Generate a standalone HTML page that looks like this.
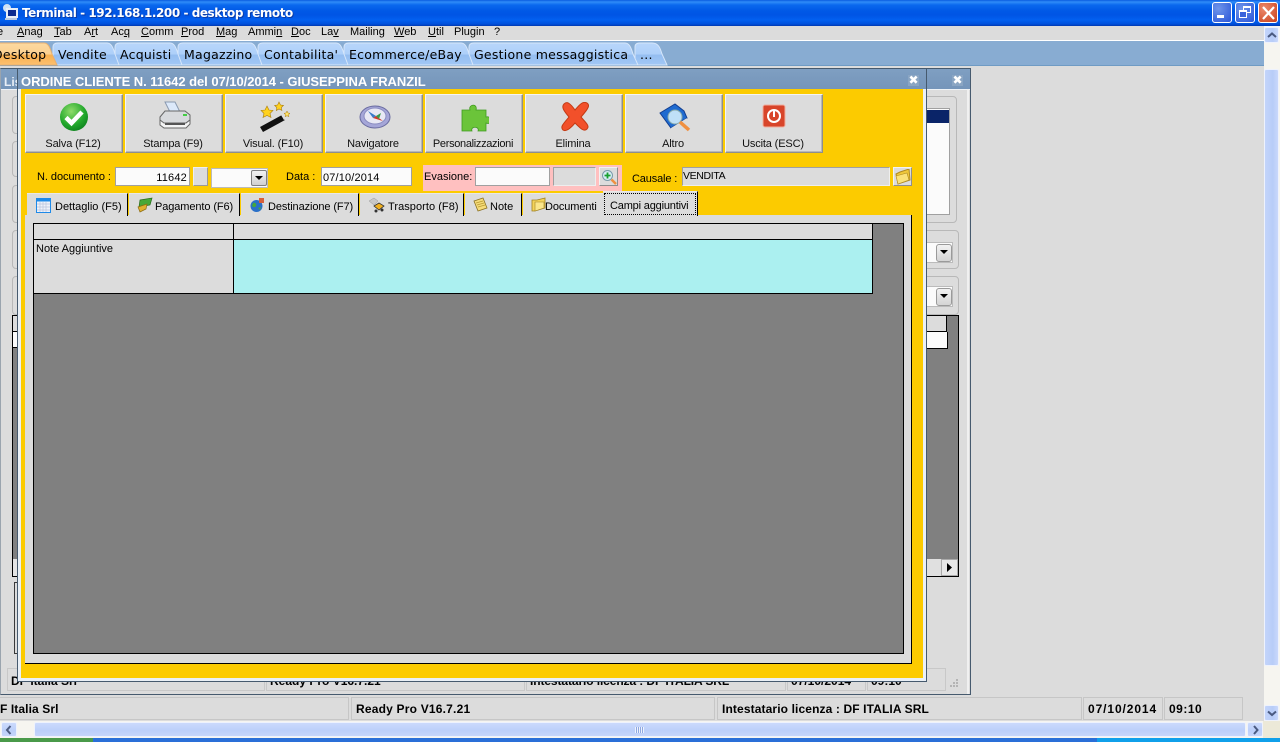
<!DOCTYPE html>
<html><head><meta charset="utf-8"><style>
html,body{margin:0;padding:0;width:1280px;height:742px;overflow:hidden;background:#dcdcdc}
body{position:relative;font-family:"Liberation Sans",sans-serif;font-size:11px;color:#000}
div,span.t,svg.a{position:absolute;box-sizing:border-box}
span.t{white-space:nowrap;line-height:13px}
.btn{background:#dcdcdc;border:1px solid;border-color:#f4f4f4 #8e8e8e #8e8e8e #f4f4f4;width:98px;height:59px;top:94px;box-shadow:inset -1px -1px 0 #b8b8b8}
.btn span.t{left:-1px;width:96px;text-align:center;top:43px;font-size:11px;color:#111;letter-spacing:-.15px}
.in{background:#fbfbfb;border:1px solid #a0a0a0}
.gb{border:1px solid #b8b8b8;border-radius:4px}
.tab{top:193px;height:23px;background:#dcdcdc;border-right:1px solid #000;border-top:1px solid #e8e8e8}
.tab span.t{top:7px}
.st{top:697px;height:23px;border:1px solid #c6c6c6;font-weight:bold;font-size:12px}
.st span.t{top:5px}
.st2{top:668px;height:23px;border:1px solid #c8c8c8;font-weight:bold;font-size:12px}
.sb{background:linear-gradient(90deg,#c3d4fb,#b8cdf8 60%,#c9d8fb);border:1px solid #eef2fd;border-radius:2px}
.sbh{background:linear-gradient(180deg,#cbdafc,#bccffa 60%,#c5d5fb);border:1px solid #eef2fd;border-radius:2px}
.x{width:11px;height:11px;background:#8aa5c3;color:#fff;font:bold 12px/11px "DejaVu Sans",sans-serif;text-align:center}
.m{top:26px}
.tb{top:48px;font:12.5px/14px "DejaVu Sans",sans-serif !important;letter-spacing:.25px}
</style></head><body>

<!-- XP title bar -->
<div style="left:0;top:0;width:1280px;height:26px;background:linear-gradient(180deg,#0a5ce0 0,#2f8cf8 2px,#0a68ee 5px,#0058e6 11px,#0055e5 15px,#0260f0 20px,#0050dc 24px,#0038b0 26px)"></div>
<svg class="a" style="left:2px;top:3px" width="17" height="18" viewBox="0 0 17 18"><circle cx="5" cy="5" r="4" fill="#cfe2f5"/><rect x="4" y="5" width="12" height="10" fill="#e8eef8"/><rect x="6" y="7" width="8" height="6" fill="#0a2a90"/><rect x="3" y="15" width="12" height="2" fill="#b8c8e0"/></svg>
<span class="t" style="left:22px;top:6px;color:#fff;font:bold 12px/14px 'DejaVu Sans',sans-serif;letter-spacing:-.45px;text-shadow:1px 1px 0 #0a3ca8">Terminal - 192.168.1.200 - desktop remoto</span>
<div style="left:1212px;top:2px;width:20px;height:21px;border:1px solid #fff;border-radius:3px;background:radial-gradient(circle at 30% 30%,#6f95ea,#2a55d8)"><div style="left:4px;top:12px;width:7px;height:3px;background:#fff"></div></div>
<div style="left:1235px;top:2px;width:20px;height:21px;border:1px solid #fff;border-radius:3px;background:radial-gradient(circle at 30% 30%,#6f95ea,#2a55d8)"><div style="left:7px;top:3px;width:8px;height:7px;border:1px solid #fff;border-top-width:2px"></div><div style="left:3px;top:7px;width:8px;height:8px;border:1px solid #fff;border-top-width:2px;background:#3a64dc"></div></div>
<div style="left:1258px;top:2px;width:20px;height:21px;border:1px solid #fff;border-radius:3px;background:radial-gradient(circle at 30% 30%,#ec8a6c,#c9401c)"><svg class="a" style="left:2px;top:3px" width="15" height="14"><path d="M2 1L13 13M13 1L2 13" stroke="#fff" stroke-width="2.2"/></svg></div>

<!-- Menu -->
<div style="left:0;top:26px;width:1264px;height:15px;background:#dcdcdc;border-bottom:1px solid #fff"></div>
<span class="t m" style="left:-3px">e</span>
<span class="t m" style="left:17px"><u>A</u>nag</span>
<span class="t m" style="left:54px"><u>T</u>ab</span>
<span class="t m" style="left:84px">A<u>r</u>t</span>
<span class="t m" style="left:111px">Ac<u>q</u></span>
<span class="t m" style="left:141px"><u>C</u>omm</span>
<span class="t m" style="left:181px"><u>P</u>rod</span>
<span class="t m" style="left:216px"><u>M</u>ag</span>
<span class="t m" style="left:248px">Ammi<u>n</u></span>
<span class="t m" style="left:291px"><u>D</u>oc</span>
<span class="t m" style="left:321px">La<u>v</u></span>
<span class="t m" style="left:350px">Mailin<u>g</u></span>
<span class="t m" style="left:394px"><u>W</u>eb</span>
<span class="t m" style="left:428px"><u>U</u>til</span>
<span class="t m" style="left:454px">Plugin</span>
<span class="t m" style="left:494px">?</span>

<!-- Tab strip -->
<div style="left:0;top:41px;width:1264px;height:25px;background:#88acd2;border-bottom:1px solid #6f9bc4"></div>
<svg class="a" style="left:0;top:41px" width="680" height="25" viewBox="0 0 680 25">
<defs>
<linearGradient id="b" x1="0" y1="0" x2="0" y2="1"><stop offset="0" stop-color="#b8d6fb"/><stop offset=".5" stop-color="#aed0f9"/><stop offset=".55" stop-color="#94bdf0"/><stop offset="1" stop-color="#a2c8f5"/></linearGradient>
<linearGradient id="o" x1="0" y1="0" x2="0" y2="1"><stop offset="0" stop-color="#fcd9a0"/><stop offset=".5" stop-color="#fbd090"/><stop offset=".55" stop-color="#f8b050"/><stop offset="1" stop-color="#fcc070"/></linearGradient>
</defs>
<g fill="url(#b)" stroke="#d6e6fa" stroke-width="1">
<path d="M635 24V6Q635 2 640 2H652C658 2 660 6 662 13L667 24Z"/>
<path d="M469 24V6Q469 2 474 2H625C629 2 631 6 633 13L638 24Z"/>
<path d="M344 24V6Q344 2 349 2H461C465 2 467 6 469 13L473 24Z"/>
<path d="M258 24V6Q258 2 263 2H336C340 2 342 6 344 13L348 24Z"/>
<path d="M178 24V6Q178 2 183 2H250C254 2 256 6 258 13L262 24Z"/>
<path d="M115 24V6Q115 2 120 2H170C174 2 176 6 178 13L182 24Z"/>
<path d="M53 24V6Q53 2 58 2H107C111 2 113 6 115 13L119 24Z"/>
</g>
<path d="M-4 24V2H44C48 2 50 6 52 13L57 24Z" fill="url(#o)" stroke="#e8b070"/>
</svg>
<span class="t tb" style="left:-7px">Desktop</span>
<span class="t tb" style="left:58px">Vendite</span>
<span class="t tb" style="left:120px">Acquisti</span>
<span class="t tb" style="left:184px">Magazzino</span>
<span class="t tb" style="left:264px">Contabilita'</span>
<span class="t tb" style="left:349px">Ecommerce/eBay</span>
<span class="t tb" style="left:474px">Gestione messaggistica</span>
<span class="t tb" style="left:640px">...</span>

<!-- Back window -->
<div style="left:0;top:68px;width:971px;height:627px;background:#dcdcdc;border:1px solid #465a6e;border-left-color:#9aa4ae"></div>
<div style="left:1px;top:69px;width:969px;height:20px;background:linear-gradient(180deg,#7f9fc2,#7595ba)"></div>
<div style="left:1px;top:89px;width:969px;height:1px;background:#eef2f6"></div>
<div style="left:967px;top:89px;width:2px;height:605px;background:#f0f0f0"></div>
<span class="t" style="left:4px;top:76px;color:#e8eef6;font-weight:bold;font-size:12px">Lis</span>
<div class="x" style="left:952px;top:75px">✖</div>
<!-- left group edges -->
<div class="gb" style="left:12px;top:96px;width:20px;height:38px"></div>
<div class="gb" style="left:12px;top:141px;width:20px;height:36px"></div>
<div class="gb" style="left:12px;top:185px;width:20px;height:38px"></div>
<div class="gb" style="left:12px;top:230px;width:20px;height:39px"></div>
<div class="gb" style="left:12px;top:276px;width:20px;height:39px"></div>
<div style="left:12px;top:315px;width:20px;height:262px;background:#808080;border:1px solid #000"></div>
<div style="left:13px;top:316px;width:16px;height:16px;background:#dcdcdc;border-bottom:1px solid #000"></div>
<div style="left:13px;top:332px;width:16px;height:16px;background:#fbfbfb;border-bottom:1px solid #000"></div>
<div style="left:13px;top:559px;width:16px;height:17px;background:#e4e4e4"></div>
<div style="left:14px;top:582px;width:20px;height:72px;border:1px solid #3a3a3a"></div>
<!-- right groups -->
<div class="gb" style="left:900px;top:96px;width:57px;height:127px"></div>
<div style="left:900px;top:108px;width:50px;height:107px;background:#fbfbfb;border:1px solid #a0a0a0"></div>
<div style="left:900px;top:110px;width:49px;height:13px;background:#0a2468"></div>
<div class="gb" style="left:900px;top:230px;width:59px;height:39px"></div>
<div style="left:900px;top:242px;width:53px;height:21px;background:#fbfbfb;border:1px solid #bbb"></div>
<div style="left:936px;top:244px;width:16px;height:18px;background:linear-gradient(180deg,#f2f2f2,#d4d4d4);border:1px solid #9a9a9a;border-radius:3px"><svg class="a" style="left:3px;top:5px" width="9" height="5"><path d="M0 0H8L4 4Z" fill="#000"/></svg></div>
<div class="gb" style="left:900px;top:276px;width:59px;height:39px"></div>
<div style="left:900px;top:286px;width:53px;height:21px;background:#fbfbfb;border:1px solid #bbb"></div>
<div style="left:936px;top:288px;width:16px;height:18px;background:linear-gradient(180deg,#f2f2f2,#d4d4d4);border:1px solid #9a9a9a;border-radius:3px"><svg class="a" style="left:3px;top:5px" width="9" height="5"><path d="M0 0H8L4 4Z" fill="#000"/></svg></div>
<div style="left:900px;top:315px;width:59px;height:262px;background:#808080;border:1px solid #000;border-left:0"></div>
<div style="left:900px;top:316px;width:47px;height:16px;background:#dcdcdc;border-right:1px solid #000;border-bottom:1px solid #000"></div>
<div style="left:900px;top:332px;width:48px;height:17px;background:#fbfbfb;border-right:1px solid #000;border-bottom:1px solid #000"></div>
<div style="left:900px;top:559px;width:58px;height:17px;background:#e0e0e0"></div>
<div style="left:941px;top:559px;width:17px;height:17px;background:#e8e8e8;border:1px solid #aaa"><svg class="a" style="left:5px;top:3px" width="6" height="9"><path d="M0 0L5 4.5L0 9Z" fill="#000"/></svg></div>
<!-- inner status -->
<div class="st2" style="left:7px;width:258px"><span class="t" style="left:3px;top:6px">DF Italia Srl</span></div>
<div class="st2" style="left:266px;width:259px"><span class="t" style="left:3px;top:6px">Ready Pro V16.7.21</span></div>
<div class="st2" style="left:526px;width:260px"><span class="t" style="left:3px;top:6px;letter-spacing:-.1px">Intestatario licenza : DF ITALIA SRL</span></div>
<div class="st2" style="left:787px;width:79px"><span class="t" style="left:3px;top:6px">07/10/2014</span></div>
<div class="st2" style="left:867px;width:79px"><span class="t" style="left:3px;top:6px">09:10</span></div>
<svg class="a" style="left:950px;top:678px" width="10" height="9"><path d="M6 1h2v2h-2zM3 4h2v2h-2zM6 4h2v2h-2zM0 7h2v2h-2zM3 7h2v2h-2zM6 7h2v2h-2z" fill="#b4b4b4"/></svg>

<!-- Front window -->
<div style="left:17px;top:68px;width:910px;height:614px;background:#eaf0f6;border:1px solid #465a6e"></div>
<div style="left:18px;top:69px;width:908px;height:20px;background:linear-gradient(180deg,#7f9fc2,#7595ba)"></div>
<span class="t" style="left:21px;top:75px;color:#fff;font-weight:bold;font-size:13px;letter-spacing:-.04px">ORDINE CLIENTE N. 11642 del 07/10/2014 - GIUSEPPINA FRANZIL</span>
<div class="x" style="left:908px;top:75px">✖</div>
<div style="left:21px;top:89px;width:902px;height:589px;background:#fccb00"></div>

<!-- Toolbar -->
<div class="btn" style="left:25px"><svg class="a" style="left:33px;top:7px" width="30" height="30" viewBox="0 0 30 30"><defs><radialGradient id="g" cx=".4" cy=".3" r=".8"><stop offset="0" stop-color="#8fdc6a"/><stop offset=".6" stop-color="#22a82c"/><stop offset="1" stop-color="#0a7a1c"/></radialGradient></defs><circle cx="15" cy="15" r="14" fill="url(#g)"/><path d="M7 15.5L12.5 21L23 10" fill="none" stroke="#fff" stroke-width="4.5"/></svg><span class="t">Salva (F12)</span></div>
<div class="btn" style="left:125px"><svg class="a" style="left:33px;top:6px" width="32" height="32" viewBox="0 0 32 32"><path d="M6 1L16 1L21 11H11Z" fill="#dce9fa" stroke="#8a9ab0"/><path d="M1 16L6 10H26L31 14V19L27 22H4L1 19Z" fill="#d8dadd" stroke="#666"/><path d="M1 19L5 22H27L31 19V23L27 27H5L1 24Z" fill="#f4f4f4" stroke="#666"/><rect x="6" y="22" width="20" height="2" fill="#555"/><rect x="24" y="13" width="4" height="2" fill="#4c4"/></svg><span class="t">Stampa (F9)</span></div>
<div class="btn" style="left:225px"><svg class="a" style="left:33px;top:6px" width="32" height="32" viewBox="0 0 32 32"><path d="M1 26L23 14L26 19L4 31Z" fill="#111"/><path d="M22 14L26 12L29 17L25 19Z" fill="#ddd"/><path d="M8 5l2 4 4 .5-3 3 1 4-4-2-4 2 1-4-3-3 4-.5z" fill="#ffd21e" stroke="#a87c10" stroke-width=".6"/><path d="M20 1l1.500 3 3 .4-2.200 2.100.6 3-2.900-1.500-2.700 1.500.5-3-2.200-2.100 3-.4z" fill="#ffd21e" stroke="#a87c10" stroke-width=".6"/><path d="M28 10l1 2 2 .3-1.500 1.400.4 2-1.900-1-1.900 1 .4-2-1.500-1.400 2-.3z" fill="#ffe26a" stroke="#a87c10" stroke-width=".5"/></svg><span class="t">Visual. (F10)</span></div>
<div class="btn" style="left:325px"><svg class="a" style="left:33px;top:9px" width="32" height="26" viewBox="0 0 32 26"><ellipse cx="16" cy="13" rx="15" ry="11" fill="#a5a6d8" stroke="#6a6ca0"/><ellipse cx="16" cy="12" rx="11" ry="8" fill="#e8e8f4" stroke="#8a8cc0"/><path d="M9 7L17 12L14 14Z" fill="#3a7ac8"/><path d="M17 12L24 17L14 14Z" fill="#d03a2a"/><path d="M17 12L22 9L20 15Z" fill="#3a9a4a"/></svg><span class="t">Navigatore</span></div>
<div class="btn" style="left:425px"><svg class="a" style="left:35px;top:7px" width="28" height="30" viewBox="0 0 28 30"><path d="M1 8H9C7 2 17 1 15 8H25V15C31 13 31 24 25 21V29H17C19 24 9 24 11 29H1Z" fill="#6bc43a" stroke="#3f9a20" stroke-width=".8"/></svg><span class="t" style="letter-spacing:-.32px">Personalizzazioni</span></div>
<div class="btn" style="left:525px"><svg class="a" style="left:34px;top:7px" width="30" height="30" viewBox="0 0 30 30"><path d="M4 2C7-1 10 1 15 8C20 2 23-1 27 1C30 3 29 6 21 15C26 21 30 24 27 27C24 30 21 27 15 21C10 27 6 30 3 28C0 25 3 22 9 15C4 9 1 5 4 2Z" fill="#f2502a" stroke="#c43a14"/></svg><span class="t">Elimina</span></div>
<div class="btn" style="left:625px"><svg class="a" style="left:33px;top:8px" width="32" height="30" viewBox="0 0 32 30"><path d="M1 10L16 1L25 8L28 15L12 25Z" fill="#1f6bd0" stroke="#123e90"/><path d="M12 25L28 15L27 18L12 27Z" fill="#ddd"/><circle cx="16" cy="14" r="7" fill="#bfe0f8" stroke="#8aa"/><path d="M21 19L30 27" stroke="#f09040" stroke-width="3.500"/></svg><span class="t">Altro</span></div>
<div class="btn" style="left:725px"><svg class="a" style="left:36px;top:9px" width="25" height="25" viewBox="0 0 25 25"><rect x="1" y="1" width="22" height="22" rx="2" fill="#d8452a" stroke="#f0b0a0"/><circle cx="12" cy="12" r="6" fill="none" stroke="#fff" stroke-width="2"/><path d="M12 7V13" stroke="#fff" stroke-width="2"/></svg><span class="t">Uscita (ESC)</span></div>

<!-- Form -->
<span class="t" style="left:37px;top:171px;letter-spacing:-.05px">N. documento :</span>
<div class="in" style="left:115px;top:167px;width:75px;height:19px"><span class="t" style="right:2px;top:4px;letter-spacing:.2px">11642</span></div>
<div style="left:193px;top:167px;width:15px;height:19px;background:#dcdcdc;border:1px solid;border-color:#eee #999 #999 #eee"></div>
<div class="in" style="left:211px;top:168px;width:57px;height:20px;border-color:#bbb"><div style="left:39px;top:1px;width:16px;height:16px;background:linear-gradient(180deg,#f2f2f2,#d0d0d0);border:1px solid #808080;border-radius:2px"><svg class="a" style="left:3px;top:5px" width="9" height="5"><path d="M0 0H8L4 4Z" fill="#000"/></svg></div></div>
<span class="t" style="left:286px;top:171px">Data :</span>
<div class="in" style="left:321px;top:167px;width:91px;height:19px"><span class="t" style="left:1px;top:4px;letter-spacing:.15px">07/10/2014</span></div>
<div style="left:423px;top:165px;width:199px;height:26px;background:#ffc0c0"></div>
<span class="t" style="left:424px;top:171px">Evasione:</span>
<div class="in" style="left:475px;top:167px;width:75px;height:19px"></div>
<div style="left:553px;top:167px;width:43px;height:19px;background:#dcdcdc;border:1px solid;border-color:#a0a0a0 #eee #eee #a0a0a0"></div>
<div style="left:599px;top:167px;width:19px;height:19px;background:#dcdcdc;border:1px solid;border-color:#f2f2f2 #8e8e8e #8e8e8e #f2f2f2"><svg class="a" style="left:1px;top:1px" width="16" height="16" viewBox="0 0 16 16"><circle cx="6.500" cy="6.500" r="5" fill="#d8ecf4" stroke="#7a9aa8"/><path d="M6.500 3.500V9.500M3.500 6.500H9.500" stroke="#18a030" stroke-width="1.800"/><path d="M10.500 10.500L15 15" stroke="#f09040" stroke-width="2.500"/></svg></div>
<span class="t" style="left:632px;top:173px;letter-spacing:-.15px">Causale :</span>
<div style="left:682px;top:167px;width:208px;height:19px;background:#dcdcdc;border:1px solid;border-color:#a0a0a0 #eee #eee #a0a0a0"><span class="t" style="left:0;top:2px;font-size:10.5px;letter-spacing:-.35px">VENDITA</span></div>
<div style="left:893px;top:167px;width:19px;height:19px;background:#dcdcdc;border:1px solid;border-color:#f2f2f2 #8e8e8e #8e8e8e #f2f2f2"><svg class="a" style="left:1px;top:1px" width="16" height="16" viewBox="0 0 16 16"><path d="M1 5L5 3L14 0L15 11L3 15Z" fill="#f0c83a" stroke="#b08a20"/><path d="M1 7L12 4L14 11L3 15Z" fill="#fbe27a" stroke="#b08a20" stroke-width=".6"/></svg></div>

<!-- Tabs panel -->
<div style="left:25px;top:215px;width:887px;height:449px;background:#dcdcdc;border-right:1px solid #000;border-bottom:1px solid #000"></div>
<div class="tab" style="left:27px;width:101px"><svg class="a" style="left:9px;top:4px" width="15" height="15" viewBox="0 0 15 15"><rect x=".5" y=".5" width="14" height="14" fill="#eef2fa" stroke="#1e8ae8"/><rect x=".5" y=".5" width="14" height="3" fill="#1e8ae8"/><path d="M1 6H14M1 9H14M1 12H14M4 4V14M7 4V14M10 4V14" stroke="#b8c4dc" stroke-width=".7"/></svg><span class="t" style="left:28px">Dettaglio (F5)</span></div>
<div class="tab" style="left:129px;width:111px"><svg class="a" style="left:8px;top:3px" width="16" height="16" viewBox="0 0 16 16"><path d="M3 3L15 1L13 8L2 10Z" fill="#48a838" stroke="#246a1a" stroke-width=".7"/><path d="M1 10L10 7L9 12L3 15Z" fill="#e0b030" stroke="#8a6a10" stroke-width=".7"/></svg><span class="t" style="left:26px;letter-spacing:-.1px">Pagamento (F6)</span></div>
<div class="tab" style="left:241px;width:118px"><svg class="a" style="left:9px;top:3px" width="15" height="16" viewBox="0 0 15 16"><circle cx="6.500" cy="9" r="6" fill="#2a70c8"/><path d="M3 6C5 5 7 7 6 9C5 11 3 10 2 9ZM8 11L11 10L10 13Z" fill="#46a83a"/><rect x="9" y="1" width="5" height="5" fill="#d8603a"/></svg><span class="t" style="left:27px;letter-spacing:-.1px">Destinazione (F7)</span></div>
<div class="tab" style="left:360px;width:104px"><svg class="a" style="left:9px;top:3px" width="16" height="16" viewBox="0 0 16 16"><path d="M0 4L5 1L9 4L5 8Z" fill="#c8c8c8" stroke="#999" stroke-width=".5"/><path d="M5 9L10 6L15 9L10 13Z" fill="#f0b020" stroke="#303030" stroke-width=".8"/><circle cx="7" cy="14" r="1.500" fill="#333"/><circle cx="13" cy="13" r="1.500" fill="#333"/></svg><span class="t" style="left:28px;letter-spacing:.05px">Trasporto (F8)</span></div>
<div class="tab" style="left:465px;width:57px"><svg class="a" style="left:8px;top:3px" width="15" height="15" viewBox="0 0 15 15"><path d="M1 4L10 1L14 11L5 14Z" fill="#f6dc7a" stroke="#8a7020" stroke-width=".8"/><path d="M3 6L10 4M4 8L11 6M5 10L12 8" stroke="#b89a30" stroke-width=".7"/></svg><span class="t" style="left:25px">Note</span></div>
<div class="tab" style="left:523px;width:80px;border-right:0"><svg class="a" style="left:8px;top:3px" width="15" height="15" viewBox="0 0 15 15"><path d="M1 3H6L14 1V11L4 14H1Z" fill="#f4d35a" stroke="#a08020" stroke-width=".8"/><path d="M4 5H13V11L4 14Z" fill="#fbe68a" stroke="#a08020" stroke-width=".6"/></svg><span class="t" style="left:22px;letter-spacing:-.1px">Documenti</span></div>
<div style="left:603px;top:191px;width:95px;height:25px;background:#dcdcdc;border-right:1px solid #000;border-top:1px solid #e8e8e8"><div style="left:1px;top:1px;width:92px;height:22px;border:1px dotted #000"></div><span class="t" style="left:7px;top:8px;letter-spacing:-.18px">Campi aggiuntivi</span></div>

<!-- Grid -->
<div style="left:33px;top:223px;width:871px;height:431px;background:#808080;border:1px solid #000"></div>
<div style="left:33px;top:223px;width:201px;height:17px;background:#dcdcdc;border:1px solid #000"></div>
<div style="left:233px;top:223px;width:640px;height:17px;background:#dcdcdc;border:1px solid #000"></div>
<div style="left:33px;top:239px;width:201px;height:55px;background:#dcdcdc;border:1px solid #000"><span class="t" style="left:2px;top:3px">Note Aggiuntive</span></div>
<div style="left:233px;top:239px;width:640px;height:55px;background:#abf0f0;border:1px solid #000"></div>

<!-- Main status -->
<div style="left:0;top:695px;width:1264px;height:27px;background:#dcdcdc"></div>
<div class="st" style="left:-1px;width:350px"><span class="t" style="left:0;letter-spacing:.1px">F Italia Srl</span></div>
<div class="st" style="left:351px;width:364px"><span class="t" style="left:4px;letter-spacing:.2px">Ready Pro V16.7.21</span></div>
<div class="st" style="left:717px;width:365px"><span class="t" style="left:4px;letter-spacing:.12px">Intestatario licenza : DF ITALIA SRL</span></div>
<div class="st" style="left:1083px;width:80px"><span class="t" style="left:4px;letter-spacing:.9px">07/10/2014</span></div>
<div class="st" style="left:1164px;width:79px"><span class="t" style="left:4px;letter-spacing:.5px">09:10</span></div>

<!-- Scrollbars -->
<div style="left:1264px;top:26px;width:16px;height:696px;background:#f6f5f0"></div>
<div class="sb" style="left:1264px;top:27px;width:15px;height:16px"><svg class="a" style="left:2px;top:4px" width="10" height="7"><path d="M1 5L5 1.500L9 5" fill="none" stroke="#4a5a80" stroke-width="2"/></svg></div>
<div class="sb" style="left:1264px;top:69px;width:15px;height:597px"></div>
<div class="sb" style="left:1264px;top:705px;width:15px;height:16px"><svg class="a" style="left:2px;top:4px" width="10" height="7"><path d="M1 1.500L5 5L9 1.500" fill="none" stroke="#4a5a80" stroke-width="2"/></svg></div>
<div style="left:0;top:721px;width:1280px;height:17px;background:#f6f5f0"></div>
<div style="left:1263px;top:721px;width:17px;height:17px;background:#ece9d8"></div>
<div class="sbh" style="left:1px;top:722px;width:16px;height:15px"><svg class="a" style="left:3px;top:2px" width="8" height="10"><path d="M5.500 1L2 5L5.500 9" fill="none" stroke="#4a5a80" stroke-width="2"/></svg></div>
<div class="sbh" style="left:34px;top:722px;width:1212px;height:15px"></div>
<div style="left:635px;top:727px;width:9px;height:6px;background:repeating-linear-gradient(90deg,#eef3fe 0 1px,#8fa8e0 1px 2px)"></div>
<div class="sbh" style="left:1247px;top:722px;width:16px;height:15px"><svg class="a" style="left:4px;top:2px" width="8" height="10"><path d="M2 1L5.500 5L2 9" fill="none" stroke="#4a5a80" stroke-width="2"/></svg></div>

<!-- Taskbar -->
<div style="left:0;top:738px;width:1280px;height:4px;background:#2a6fd8"></div>
<div style="left:0;top:738px;width:93px;height:4px;background:#4a9a4a"></div>
<div style="left:1097px;top:738px;width:183px;height:4px;background:#10a0ea"></div>
</body></html>
